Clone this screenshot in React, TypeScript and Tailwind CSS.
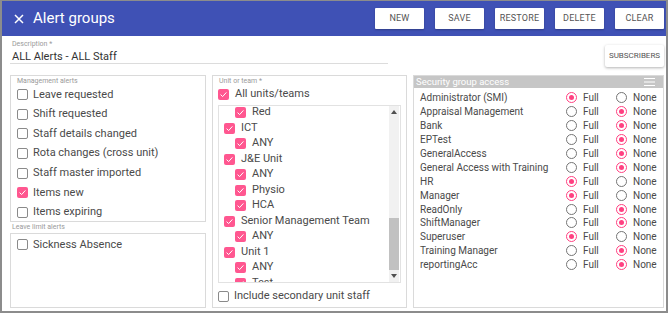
import React from 'react'

const Check = ({ on, size = 11 }: { on?: boolean; size?: number }) =>
  on ? (
    <span
      className="shrink-0 rounded-[2px] bg-[#ff5790] flex items-center justify-center"
      style={{ width: size, height: size }}
    >
      <svg width={size} height={size} viewBox="0 0 11 11">
        <path d="M2.6 5.6 L4.6 7.6 L8.4 3.4" fill="none" stroke="#fff" strokeWidth="1" />
      </svg>
    </span>
  ) : (
    <span
      className="shrink-0 rounded-[2px] border border-[#8a8a8a] bg-white"
      style={{ width: size, height: size }}
    />
  )

const Radio = ({ on }: { on?: boolean }) => (
  <span
    className={`shrink-0 w-[11px] h-[11px] rounded-full border flex items-center justify-center ${
      on ? 'border-[#ff4081]' : 'border-[#757575]'
    }`}
  >
    {on && <span className="w-[5px] h-[5px] rounded-full bg-[#ff4081]" />}
  </span>
)

const mgmt: [string, boolean][] = [
  ['Leave requested', false],
  ['Shift requested', false],
  ['Staff details changed', false],
  ['Rota changes (cross unit)', false],
  ['Staff master imported', false],
  ['Items new', true],
  ['Items expiring', false],
]

const units: [string, number][] = [
  ['Red', 2],
  ['ICT', 1],
  ['ANY', 2],
  ['J&E Unit', 1],
  ['ANY', 2],
  ['Physio', 2],
  ['HCA', 2],
  ['Senior Management Team', 1],
  ['ANY', 2],
  ['Unit 1', 1],
  ['ANY', 2],
  ['Test', 2],
]

const groups: [string, boolean][] = [
  ['Administrator (SMI)', true],
  ['Appraisal Management', false],
  ['Bank', false],
  ['EPTest', false],
  ['GeneralAccess', false],
  ['General Access with Training', false],
  ['HR', true],
  ['Manager', true],
  ['ReadOnly', false],
  ['ShiftManager', false],
  ['Superuser', true],
  ['Training Manager', false],
  ['reportingAcc', false],
]

export default function App() {
  return (
    <div className="w-[671px] h-[315px] bg-white font-['Roboto',sans-serif] text-[#4a4a4a]">
      <div className="w-[668px] h-[313px] border-2 border-t border-[#8c8c8c] flex flex-col">
        {/* title bar */}
        <div className="h-[35px] bg-[#3f51b5] flex items-center pl-[12px] pr-[2px] shrink-0">
          <svg width="10" height="10" viewBox="0 0 10 10">
            <path d="M1 1 L9 9 M9 1 L1 9" stroke="#fff" strokeWidth="1.5" />
          </svg>
          <span className="ml-[9px] text-[15px] text-white leading-none">Alert groups</span>
          <div className="ml-auto flex gap-[11px]">
            {['NEW', 'SAVE', 'RESTORE', 'DELETE', 'CLEAR'].map(b => (
              <button
                key={b}
                className="w-[49px] h-[21px] bg-white rounded-[1px] text-[9px] tracking-[0.2px] text-[#555] shadow-[0_1px_2px_rgba(0,0,0,0.25)]"
              >
                {b}
              </button>
            ))}
          </div>
        </div>

        <div className="flex-1 pl-[8px] pr-[2px] flex flex-col">
          {/* description */}
          <div className="h-[39px] flex items-start shrink-0">
            <div className="w-[378px] pt-[4px]">
              <div className="text-[7px] leading-[9px] text-[#9a9a9a] pl-[2px]">Description *</div>
              <div className="h-[15px] text-[11px] leading-[15px] text-[#333] pl-[2px] border-b border-[#dcdcdc]">
                ALL Alerts - ALL Staff
              </div>
            </div>
            <button className="ml-auto mt-[9px] w-[59px] h-[22px] bg-white rounded-[2px] text-[8px] text-[#555] shadow-[0_1px_3px_rgba(0,0,0,0.3)]">
              SUBSCRIBERS
            </button>
          </div>

          {/* panels */}
          <div className="flex gap-[6px] h-[233px]">
            {/* left column */}
            <div className="w-[196px] flex flex-col">
              <div className="h-[147px] border border-[#dadada] pl-[6px] pt-[1px]">
                <div className="text-[7px] leading-[8px] text-[#9a9a9a]">Management alerts</div>
                {mgmt.map(([t, on]) => (
                  <div key={t} className="h-[19.6px] flex items-center gap-[5px] text-[11px]">
                    <Check on={on} />
                    <span>{t}</span>
                  </div>
                ))}
              </div>
              <div className="h-[11px] text-[7px] leading-[11px] text-[#9a9a9a] pl-[2px]">Leave limit alerts</div>
              <div className="flex-1 border border-[#dadada] pl-[6px] pt-[1px]">
                <div className="h-[19.6px] flex items-center gap-[5px] text-[11px]">
                  <Check />
                  <span>Sickness Absence</span>
                </div>
              </div>
            </div>

            {/* middle column */}
            <div className="w-[195px] border border-[#dadada] pl-[5px] pr-[5px] pt-[1px] flex flex-col">
              <div className="text-[7px] leading-[8px] text-[#9a9a9a] pl-[1px]">Unit or team *</div>
              <div className="h-[19px] flex items-center gap-[6px] text-[11px]">
                <Check on />
                <span>All units/teams</span>
              </div>
              <div className="mt-[1px] h-[180px] border border-[#e2e2e2] flex overflow-hidden">
                <div className="flex-1 overflow-hidden">
                  <div className="-mt-[1px]">
                    {units.map(([t, lvl], i) => (
                      <div
                        key={i}
                        className={`h-[15.5px] flex items-center gap-[6px] text-[11px] ${
                          lvl === 1 ? 'pl-[5px]' : 'pl-[16px]'
                        }`}
                      >
                        <Check on size={11} />
                        <span>{t}</span>
                      </div>
                    ))}
                  </div>
                </div>
                <div className="w-[10px] mr-[1px] bg-[#f1f1f1] flex flex-col items-center">
                  <div className="h-[12px] flex items-center justify-center">
                    <svg width="6" height="4" viewBox="0 0 6 4">
                      <path d="M0 4 L3 0 L6 4 Z" fill="#505050" />
                    </svg>
                  </div>
                  <div className="mt-[100px] w-[10px] h-[52px] bg-[#c1c1c1]" />
                  <div className="mt-auto h-[12px] flex items-center justify-center">
                    <svg width="6" height="4" viewBox="0 0 6 4">
                      <path d="M0 0 L6 0 L3 4 Z" fill="#505050" />
                    </svg>
                  </div>
                </div>
              </div>
              <div className="mt-[2px] h-[22px] flex items-center gap-[5px] text-[11px]">
                <Check />
                <span>Include secondary unit staff</span>
              </div>
            </div>

            {/* right column */}
            <div className="w-[251px] border border-[#dadada] flex flex-col">
              <div className="h-[12px] bg-[#c6c6c6] flex items-center pl-[2px] pr-[8px]">
                <span className="text-[9.5px] leading-none text-white">Security group access</span>
                <svg className="ml-auto" width="11" height="8" viewBox="0 0 11 8">
                  <path d="M0 0.5 H11 M0 4 H11 M0 7.5 H11" stroke="#fff" strokeWidth="1" />
                </svg>
              </div>
              <div className="pt-[3px] pl-[6px]">
                {groups.map(([g, full]) => (
                  <div key={g} className="h-[13.9px] flex items-center text-[10px]">
                    <span className="w-[146px]">{g}</span>
                    <span className="w-[50px] flex items-center gap-[6px]">
                      <Radio on={full} />
                      <span>Full</span>
                    </span>
                    <span className="flex items-center gap-[6px]">
                      <Radio on={!full} />
                      <span>None</span>
                    </span>
                  </div>
                ))}
              </div>
            </div>
          </div>
        </div>
      </div>
    </div>
  )
}
